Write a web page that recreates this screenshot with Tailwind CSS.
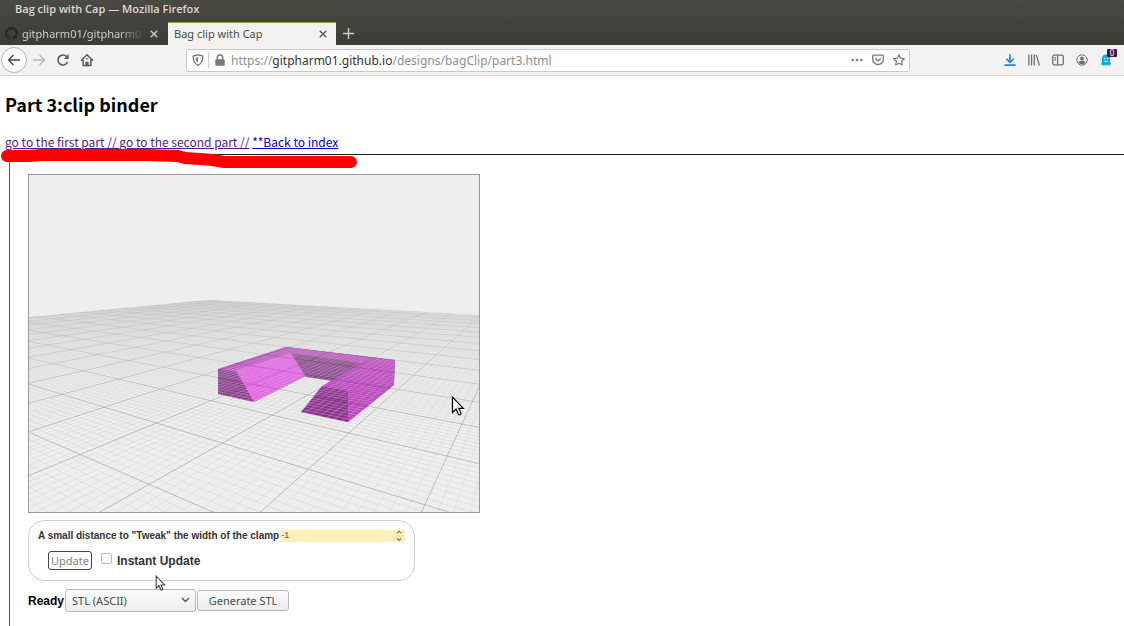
<!DOCTYPE html>
<html lang="en">
<head>
<meta charset="utf-8">
<meta name="viewport" content="width=device-width, initial-scale=1">
<title>Bag clip with Cap</title>
<script src="https://cdn.jsdelivr.net/npm/@tailwindcss/browser@4"></script>
</head>
<body class="relative flex min-h-screen flex-col overflow-x-hidden bg-white font-['Noto_Sans',sans-serif] text-black">
<header class="shrink-0">
  <div class="bg-linear-to-b from-[#4a4944] to-[#3c3b37]">
    <div class="flex h-[22px] items-center px-[15px] pb-1 font-['Open_Sans',sans-serif] text-[11px] font-semibold text-[#dfdbd2]">Bag clip with Cap — Mozilla Firefox</div>
    <div class="flex h-[23px] items-stretch text-[11px]">
      <div class="flex w-[168px] items-center gap-1 pr-2 pl-[5px] text-[#d0cdc6]">
        <svg class="size-[13px] shrink-0" viewBox="0 0 16 16" fill="#24292e" aria-hidden="true"><path d="M8 0C3.58 0 0 3.58 0 8c0 3.54 2.29 6.53 5.47 7.59.4.07.55-.17.55-.38 0-.19-.01-.82-.01-1.49-2.01.37-2.53-.49-2.69-.94-.09-.23-.48-.94-.82-1.13-.28-.15-.68-.52-.01-.53.63-.01 1.08.58 1.23.82.72 1.21 1.87.87 2.33.66.07-.52.28-.87.51-1.07-1.78-.2-3.64-.89-3.64-3.95 0-.87.31-1.59.82-2.15-.08-.2-.36-1.02.08-2.12 0 0 .67-.21 2.2.82a7.6 7.6 0 0 1 4 0c1.53-1.04 2.2-.82 2.2-.82.44 1.1.16 1.92.08 2.12.51.56.82 1.27.82 2.15 0 3.07-1.87 3.75-3.65 3.95.29.25.54.73.54 1.48 0 1.07-.01 1.93-.01 2.2 0 .21.15.46.55.38A8 8 0 0 0 16 8c0-4.42-3.58-8-8-8z"/></svg>
        <span class="min-w-0 flex-1 overflow-hidden pt-px whitespace-nowrap mask-r-from-80%">gitpharm01/gitpharm01.github.io</span>
        <button aria-label="Close tab" class="flex size-3 items-center justify-center"><svg class="size-2" viewBox="0 0 8 8" stroke="#d0cdc6" stroke-width="1.4" fill="none"><path d="M.7.7l6.6 6.6M7.3.7L.7 7.3"/></svg></button>
      </div>
      <div class="flex w-[168px] items-center border-t border-[#7ba044] bg-[#f3f2f1] pr-[7px] pl-[6px] text-[#4a4a4a]">
        <span class="min-w-0 flex-1 whitespace-nowrap">Bag clip with Cap</span>
        <button aria-label="Close tab" class="flex size-3 items-center justify-center"><svg class="size-2" viewBox="0 0 8 8" stroke="#555" stroke-width="1.3" fill="none"><path d="M.7.7l6.6 6.6M7.3.7L.7 7.3"/></svg></button>
      </div>
      <button aria-label="New tab" class="flex w-6 items-center justify-center"><svg class="size-[11px]" viewBox="0 0 11 11" stroke="#cfccc5" stroke-width="1.4" fill="none"><path d="M5.5 0v11M0 5.5h11"/></svg></button>
    </div>
  </div>
  <nav class="flex h-[31px] items-center border-b border-[#d8d7d5] bg-[#f3f2f1] pr-2" aria-label="Browser toolbar">
    <div class="flex w-[186px] items-center">
      <button aria-label="Back" class="ml-px flex size-[26px] items-center justify-center rounded-full border border-[#b5b4b2] bg-[#fbfbfb]"><svg class="size-[14px]" viewBox="0 0 14 14" fill="none" stroke="#4a4a4a" stroke-width="1.5" stroke-linecap="round" stroke-linejoin="round"><path d="M12.500 7H1.500M6 2.500L1.500 7 6 11.500"/></svg></button>
      <button aria-label="Forward" class="ml-[5px] flex size-[14px]"><svg viewBox="0 0 14 14" fill="none" stroke="#b9b8b6" stroke-width="1.4" stroke-linecap="round" stroke-linejoin="round"><path d="M1.500 7h11M8 2.500L12.500 7 8 11.500"/></svg></button>
      <button aria-label="Reload" class="ml-[10px] flex size-[14px]"><svg viewBox="0 0 14 14" fill="none" stroke="#5c5c5c" stroke-width="1.7"><path d="M11.6 9A5 5 0 1 1 10.6 3.500"/><path d="M12.6 1v5H7.8z" fill="#5c5c5c" stroke="none"/></svg></button>
      <button aria-label="Home" class="ml-[10px] flex size-[14px]"><svg viewBox="0 0 14 14" fill="none" stroke="#5c5c5c" stroke-width="1.5" stroke-linejoin="round" stroke-linecap="round"><path d="M1.500 7.2L7 1.700l5.500 5.500M3.1 6.500v6h7.8v-6"/><path d="M5.700 12.500V9h2.600v3.500z" fill="#5c5c5c" stroke-width=".6"/><path d="M7 5.600v.4"/></svg></button>
    </div>
    <div class="flex h-[23px] min-w-0 flex-1 items-center rounded-[3px] border border-[#cac9c7] bg-white pr-1 pl-[5px]">
      <svg class="size-[12px] shrink-0" viewBox="0 0 12 12" fill="none" stroke="#777" stroke-width="1.3" stroke-linejoin="round" aria-hidden="true"><path d="M6 .8L10.8 2c.2 4.8-1 7.4-4.8 9.3C2.200 9.400 1 6.800 1.200 2z"/><path d="M6 3.200v5.600C4.200 7.500 3.600 6 3.600 3.700z" fill="#777" stroke="none"/></svg>
      <span class="ml-1 h-4 w-px bg-[#cfcfcf]"></span>
      <svg class="ml-[6px] h-[12px] w-[10px] shrink-0" viewBox="0 0 10 12" aria-hidden="true"><path d="M2.300 6V3.600a2.700 2.700 0 0 1 5.400 0V6" fill="none" stroke="#7a7a7a" stroke-width="1.500"/><rect x=".3" y="5.300" width="9.400" height="6.400" rx="1" fill="#7a7a7a"/></svg>
      <div class="ml-[6px] min-w-0 flex-1 truncate pt-[2px] text-xs text-[#8f8f8f]">https://<span class="text-[#333]">gitpharm01.github.io</span>/designs/bagClip/part3.html</div>
      <button aria-label="Page actions" class="flex h-3 w-3"><svg viewBox="0 0 12 12" fill="#777"><circle cx="1.600" cy="6" r="1.300"/><circle cx="6" cy="6" r="1.300"/><circle cx="10.400" cy="6" r="1.300"/></svg></button>
      <button aria-label="Save to Pocket" class="ml-[9px] flex h-3 w-3"><svg viewBox="0 0 12 12" fill="none" stroke="#777" stroke-width="1.300" stroke-linecap="round" stroke-linejoin="round"><path d="M1.500 1.200h9q.8 0 .8.800v3.200a5.300 5.300 0 0 1-10.600 0V2q0-.8.800-.8z"/><path d="M3.600 4.600L6 7l2.400-2.400"/></svg></button>
      <button aria-label="Bookmark" class="ml-[9px] flex h-3 w-3"><svg viewBox="0 0 12 12" fill="none" stroke="#777" stroke-width="1.200" stroke-linejoin="round"><path d="M6 .8l1.600 3.400 3.700.5-2.700 2.600.7 3.700L6 9.200 2.700 11l.7-3.700L.7 4.700l3.700-.5z"/></svg></button>
    </div>
    <div class="flex w-[206px] items-center justify-end gap-3">
      <button aria-label="Downloads" class="flex size-3"><svg viewBox="0 0 12 12" fill="none" stroke="#1a86ee" stroke-width="1.600" stroke-linecap="round" stroke-linejoin="round"><path d="M6 .8v7.400M2.800 5.200L6 8.400l3.200-3.200M.9 11.100h10.200"/></svg></button>
      <button aria-label="Library" class="flex size-3"><svg viewBox="0 0 12 12" fill="none" stroke="#707070" stroke-width="1.300"><path d="M.9.600v10.900M3.600.600v10.900M6.300.600v10.900M8.200.900l3.300 10.600"/></svg></button>
      <button aria-label="Sidebars" class="flex size-3"><svg viewBox="0 0 12 12" fill="none" stroke="#707070" stroke-width="1.300"><rect x=".7" y="1.200" width="10.600" height="9.600" rx="1.600"/><path d="M5.600 1.200v9.600M2.200 3.800h1.800M2.200 5.800h1.800"/></svg></button>
      <button aria-label="Account" class="flex size-3"><svg viewBox="0 0 12 12"><circle cx="6" cy="6" r="5.200" fill="none" stroke="#707070"/><circle cx="6" cy="4.500" r="1.900" fill="#707070"/><path d="M2.500 8.700C3 7 4.200 6.800 6 6.800s3 .2 3.500 1.900A4.200 4.200 0 0 1 6 10.200a4.200 4.200 0 0 1-3.500-1.500z" fill="#707070"/></svg></button>
      <button aria-label="Ghostery, 0 trackers" class="relative mr-1 flex size-3"><svg viewBox="0 0 12 12"><path d="M6 .5C3 .5 2 2.500 2 5v3L.6 10.600l2 .2.800 1 1.600-1 1.200 1 1.400-1 1.500 1 .6-1.100 1.500-.3L10 8V5C10 2.500 9 .5 6 .5z" fill="#00aef0"/><circle cx="4.600" cy="4.600" r=".8" fill="#fff"/><circle cx="7.400" cy="4.600" r=".8" fill="#fff"/><path d="M4.200 7q1.800 1.600 3.600 0" fill="none" stroke="#fff" stroke-width=".9"/></svg><span class="absolute -top-[5px] left-[7px] flex h-2 w-[10px] items-center justify-center rounded-[1px] bg-[#421742] text-[8px] leading-none text-white">0</span></button>
    </div>
  </nav>
</header>

<main class="flex flex-1 flex-col pt-[13px]">
  <h1 class="px-[5px] font-['Noto_Sans_CJK_SC',sans-serif] text-lg leading-[30px] font-bold">Part 3:clip binder</h1>
  <p class="mt-[13px] mb-[2px] px-[5px] font-['Noto_Sans_CJK_SC',sans-serif] text-xs leading-5 underline-offset-1"><a href="#part1" class="text-[#551a8b] underline">go to the first part // </a><a href="#part2" class="text-[#551a8b] underline">go to the second part //</a> <a href="#index" class="text-[#0000cc] underline">**Back to index</a></p>
  <section class="ml-[9px] flex flex-1 flex-col items-start border-t border-l border-t-[#222] border-l-[#555] pt-[19px] pl-[18px] font-['Liberation_Sans',sans-serif]">
    <div class="border border-[#999] bg-[#eee]">
      <canvas id="viewer" width="450" height="337" class="block" role="img" aria-label="3D view of the clip binder"></canvas>
    </div>
    <form class="mt-[7px] w-[387px] rounded-[16px] border border-[#d0d0d0] px-[9px] pt-[9px] pb-[10px] text-[#333]">
      <div class="flex h-3 items-center">
        <label for="tweak" class="mb-[2px] whitespace-nowrap text-[10px] font-bold">A small distance to "Tweak" the width of the clamp</label>
        <div class="relative ml-px flex h-3 min-w-0 flex-1 bg-[#fdf0b8]">
          <input id="tweak" type="text" inputmode="numeric" value="-1" class="h-3 w-full bg-transparent pl-px text-[9px] text-[#555]">
          <svg class="absolute top-0 right-px h-3 w-[10px]" viewBox="0 0 10 12" fill="none" stroke="#666" stroke-width="1.100" aria-hidden="true"><circle cx="5" cy="2.500" r="4" stroke="#e8d9a0" stroke-width=".6"/><circle cx="5" cy="9.500" r="4" stroke="#e8d9a0" stroke-width=".6"/><path d="M3 3.200l2-2 2 2M3 8.400l2 2 2-2"/></svg>
        </div>
      </div>
      <div class="mt-[9px] ml-[10px] flex h-[19px] items-center">
        <button type="button" class="h-[19px] w-[44px] rounded-[3px] border border-[#444] bg-white font-['Noto_Sans',sans-serif] text-[11px] leading-none text-[#858585]">Update</button>
        <input id="instant" type="checkbox" class="mb-1 ml-[9px] size-[11px] appearance-none rounded-[2px] border border-[#bbb] bg-[#fafafa]">
        <label for="instant" class="ml-[5px] text-xs font-bold">Instant Update</label>
      </div>
    </form>
    <div class="mt-2 flex h-[23px] items-center font-['Noto_Sans',sans-serif] text-[11px] text-[#4c4c4c]">
      <label for="format" class="font-['Liberation_Sans',sans-serif] text-xs font-bold text-black">Ready</label>
      <div class="relative ml-px">
        <select id="format" class="h-[23px] w-[131px] appearance-none rounded-[3px] border border-[#b8b8b8] bg-linear-to-b from-[#fbfbfb] to-[#ededed] pt-px pl-[6px]"><option>STL (ASCII)</option></select>
        <svg class="pointer-events-none absolute top-2 right-[6px] h-[6px] w-[9px]" viewBox="0 0 9 6" fill="none" stroke="#555" stroke-width="1.400" aria-hidden="true"><path d="M1 1l3.500 3.500L8 1"/></svg>
      </div>
      <button type="button" class="ml-px h-[21px] w-[92px] rounded-[3px] border border-[#b8b8b8] bg-linear-to-b from-[#fbfbfb] to-[#ededed] pt-px">Generate STL</button>
    </div>
  </section>
</main>

<svg class="pointer-events-none absolute top-[145px] left-0 h-[28px] w-[362px]" viewBox="0 0 362 28" fill="none" stroke="#fe0000" stroke-width="12" stroke-linecap="round" stroke-linejoin="round" aria-hidden="true"><path d="M7 11H28L42 10H145L178 11L185 13L200 14L213 15L224 17H351"/></svg>
<svg class="pointer-events-none absolute top-[396px] left-[451px] h-[21px] w-[14px]" viewBox="0 0 14 21" aria-hidden="true"><path d="M1.500 1.200v15.300l3.600-3.400 2.500 5.600q1.400.5 2.500-1.100l-2.400-5.200h4.600z" fill="#fff" stroke="#000" stroke-width="1.200"/></svg>
<svg class="pointer-events-none absolute top-[575px] left-[155px] h-[17px] w-[11px]" viewBox="0 0 14 21" aria-hidden="true"><path d="M1.500 1.200v15.300l3.600-3.400 2.500 5.600q1.400.5 2.500-1.100l-2.400-5.200h4.600z" fill="#fff" stroke="#444" stroke-width="1.400"/></svg>

<script>
// Floor-plane anchors: [grid u, grid v, canvas x, canvas y]
const anchors = [
  [1,1,120,309.300],[1,2,50.300,279.300],[1,3,0,257],
  [2,-1,395,329.700],[2,0,280.300,294.300],[2,1,193.700,268.300],[2,2,127.300,248.300],[2,3,74.300,232],
  [3,-1,418.300,281],[3,0,320,258],[3,2,183,225.700],[3,3,131.700,214],[3,5,54.300,195.700],
  [4,-1,434,249],[4,0,346.300,233]
];
// Least-squares camera projection of the floor plane
function fit(points) {
  const m = Array.from({length: 8}, () => new Array(9).fill(0));
  for (const [u, v, x, y] of points) {
    for (const r of [[u,v,1,0,0,0,-u*x,-v*x,x],[0,0,0,u,v,1,-u*y,-v*y,y]])
      for (let i = 0; i < 8; i++) for (let j = 0; j < 9; j++) m[i][j] += r[i] * r[j];
  }
  for (let i = 0; i < 8; i++) {
    let p = i;
    for (let k = i + 1; k < 8; k++) if (Math.abs(m[k][i]) > Math.abs(m[p][i])) p = k;
    [m[i], m[p]] = [m[p], m[i]];
    for (let k = 0; k < 8; k++) if (k !== i) {
      const f = m[k][i] / m[i][i];
      for (let j = i; j < 9; j++) m[k][j] -= f * m[i][j];
    }
  }
  return m.map((r, i) => r[8] / r[i]);
}
const h = fit(anchors);
const depth = (u, v) => h[6]*u + h[7]*v + 1;
const project = (u, v) => { const w = depth(u, v); return [(h[0]*u+h[1]*v+h[2])/w, (h[3]*u+h[4]*v+h[5])/w]; };
const c = document.getElementById('viewer').getContext('2d');

function face(color, pts) {
  c.fillStyle = color;
  c.beginPath();
  pts.forEach(([x, y]) => c.lineTo(x, y));
  c.closePath();
  c.fill();
}
face('#b840b8', [[189,194],[257,172],[366,185],[365,210],[319,247],[272,237],[296,212],[304,206],[277,201],[225,227],[189,219]]);
face('#be48c0', [[189,194],[257,172],[366,185],[296,212],[332,191],[262,178],[207,197]]);
face('#8c3a8e', [[189,194],[207,197],[225,227],[189,219]]);
face('#ea5cec', [[207,195],[262,178],[277,201],[225,227]]);
face('#88408a', [[262,178],[332,188],[304,206],[277,202]]);
face('#c040c2', [[332,188],[366,185],[365,210],[319,247],[319,216],[293,211]]);
face('#8c308e', [[293,211],[319,216],[319,247],[272,237]]);

c.save();
c.beginPath();
[[0,142],[180,125],[450,140],[450,337],[0,337]].forEach(([x, y]) => c.lineTo(x, y));
c.clip();
// Lines fade towards the horizon
function fade(rgb, near, far) {
  const g = c.createLinearGradient(0, 125, 0, 240);
  g.addColorStop(0, `rgba(${rgb},${far})`);
  g.addColorStop(1, `rgba(${rgb},${near})`);
  return g;
}
const minor = fade('204,204,204', 0.34, 0.18);
const major = fade('128,128,128', 0.45, 0.1);
function segment(u1, v1, u2, v2) {
  const steps = 200;
  let open = false;
  c.beginPath();
  for (let i = 0; i <= steps; i++) {
    const u = u1 + (u2-u1)*i/steps, v = v1 + (v2-v1)*i/steps;
    if (depth(u, v) < 0.15) { open = false; continue; }
    const [x, y] = project(u, v);
    open ? c.lineTo(x, y) : c.moveTo(x, y);
    open = true;
  }
  c.stroke();
}
c.lineWidth = 1;
c.strokeStyle = minor;
for (let i = -60; i <= 200; i++) {
  if (i % 10 === 0) continue;
  segment(i/10, -6, i/10, 20);
  segment(-6, i/10, 20, i/10);
}
c.strokeStyle = major;
for (let i = -6; i <= 20; i++) {
  segment(i, -6, i, 20);
  segment(-6, i, 20, i);
}
c.restore();
</script>
</body>
</html>
